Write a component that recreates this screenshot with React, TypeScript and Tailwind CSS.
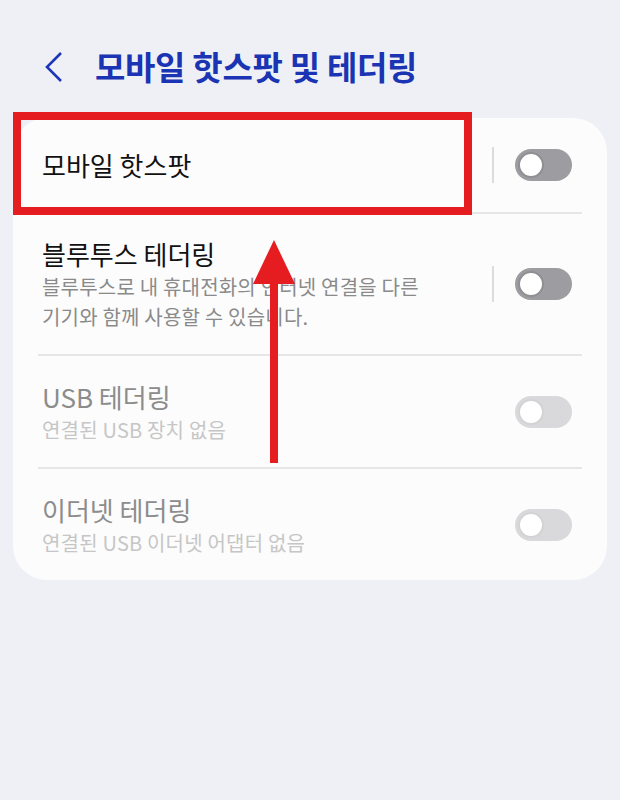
import React from 'react';

type Row = {
  title: string;
  subtitle?: string[];
  disabled?: boolean;
  divider?: boolean;
};

const rows: Row[] = [
  { title: '모바일 핫스팟', divider: true },
  {
    title: '블루투스 테더링',
    subtitle: ['블루투스로 내 휴대전화의 인터넷 연결을 다른', '기기와 함께 사용할 수 있습니다.'],
    divider: true,
  },
  { title: 'USB 테더링', subtitle: ['연결된 USB 장치 없음'], disabled: true },
  { title: '이더넷 테더링', subtitle: ['연결된 USB 이더넷 어댑터 없음'], disabled: true },
];

function Toggle({ disabled }: { disabled?: boolean }) {
  return (
    <div
      className={`flex h-[32px] w-[57px] items-center rounded-full px-[3px] ${
        disabled ? 'bg-[#d9d9db]' : 'bg-[#9c9ca1]'
      }`}
    >
      <div
        className={`h-[26px] w-[26px] rounded-full bg-white border-2 ${
          disabled ? 'border-[#d3d3d5]' : 'border-[#8f8f94]'
        }`}
      />
    </div>
  );
}

function SettingRow({ row, first }: { row: Row; first: boolean }) {
  const titleColor = row.disabled ? 'text-[#8c8c8c]' : 'text-[#111111]';
  const subColor = row.disabled ? 'text-[#c6c6c6]' : 'text-[#8a8a8a]';
  const height = !row.subtitle ? 'h-[94px]' : row.subtitle.length > 1 ? 'h-[140px]' : 'h-[111px]';
  return (
    <div>
      {!first && <div className="mx-[25px] h-[2px] bg-[#e6e6e8]" />}
      <div className={`flex items-center pl-[29px] pr-[35px] ${height}`}>
        <div className="flex-1">
          <div className={`text-[26px] leading-[36px] ${titleColor}`}>{row.title}</div>
          {row.subtitle &&
            row.subtitle.map((s) => (
              <div key={s} className={`text-[20px] leading-[30px] tracking-[0.2px] ${subColor}`}>
                {s}
              </div>
            ))}
        </div>
        {row.divider && <div className="mr-[21px] h-[36px] w-[2px] bg-[#dcdcde]" />}
        <Toggle disabled={row.disabled} />
      </div>
    </div>
  );
}

export default function App() {
  return (
    <div
      className="relative min-h-[800px] w-[620px] bg-[#eff0f6]"
      style={{ fontFamily: '"Noto Sans CJK KR", "Noto Sans", sans-serif' }}
    >
      {/* header */}
      <div className="flex h-[118px] items-start pt-[44px]">
        <svg className="ml-[42px] mt-[6px]" width="24" height="34" viewBox="0 0 24 34">
          <path d="M19 3 L5 17 L19 31" fill="none" stroke="#1c36b5" strokeWidth="2.6" />
        </svg>
        <h1 className="ml-[29px] text-[33px] font-bold leading-[44px] text-[#1a34b4] tracking-[-0.3px]">
          모바일 핫스팟 및 테더링
        </h1>
      </div>

      {/* card */}
      <div className="mx-[13px] overflow-hidden rounded-[34px] bg-[#fcfcfc]">
        {rows.map((r, i) => (
          <SettingRow key={r.title} row={r} first={i === 0} />
        ))}
      </div>

      {/* red highlight annotation */}
      <div className="absolute left-[13px] top-[112px] h-[103px] w-[459px] border-[8px] border-[#e51d20]" />

      {/* red arrow annotation */}
      <svg className="absolute left-[250px] top-[236px]" width="50" height="230" viewBox="0 0 50 230">
        <polygon points="24,4 3,48 45,48" fill="#e51d20" />
        <rect x="20" y="44" width="8" height="183" fill="#e51d20" />
      </svg>
    </div>
  );
}
